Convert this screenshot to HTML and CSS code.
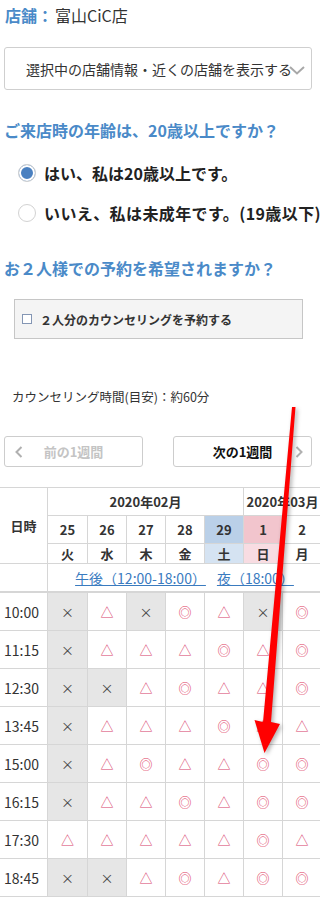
FILE: index.html
```html
<!DOCTYPE html>
<html lang="ja">
<head>
<meta charset="utf-8">
<title>予約</title>
<link rel="stylesheet" href="styles.css">
</head>
<body>
<div class="page">
  <div class="store"><span class="store-label">店舗：</span><span class="store-name">富山CiC店</span></div>
  <div class="select">選択中の店舗情報・近くの店舗を表示する<svg class="select-chev" width="16" height="9" viewBox="0 0 16 9"><polyline points="1,1 8,7.5 15,1" fill="none" stroke="#a8a8a8" stroke-width="2"/></svg></div>
  <h2 class="question q1">ご来店時の年齢は、20歳以上ですか？</h2>
  <div class="radios">
    <div class="radio"><span class="dot dot-on"></span>はい、私は20歳以上です。</div>
    <div class="radio"><span class="dot"></span><span class="wide">いいえ、私は未成年です。(19歳以下)</span></div>
  </div>
  <h2 class="question q2">お２人様での予約を希望されますか？</h2>
  <div class="pair"><span class="check"></span>２人分のカウンセリングを予約する</div>
  <p class="duration">カウンセリング時間(目安)：約60分</p>
  <div class="nav">
    <div class="btn btn-prev"><svg class="nav-chev nav-chev-l" width="8" height="12" viewBox="0 0 8 12"><polyline points="6.5,1 1.5,6 6.5,11" fill="none" stroke="#b0b0b0" stroke-width="2"/></svg>前の1週間</div>
    <div class="btn btn-next">次の1週間<svg class="nav-chev nav-chev-r" width="8" height="12" viewBox="0 0 8 12"><polyline points="1.5,1 6.5,6 1.5,11" fill="none" stroke="#b0b0b0" stroke-width="2"/></svg></div>
  </div>
</div>

<div class="cal">
  <div class="c h-date">日時</div>
  <div class="c h-month m1">2020年02月</div>
  <div class="c h-month m2">2020年03月</div>
  <div class="c h-day">25</div><div class="c h-day">26</div><div class="c h-day">27</div><div class="c h-day">28</div><div class="c h-day sat">29</div><div class="c h-day sun">1</div><div class="c h-day">2</div>
  <div class="c h-wd">火</div><div class="c h-wd">水</div><div class="c h-wd">木</div><div class="c h-wd">金</div><div class="c h-wd sat-l">土</div><div class="c h-wd sun-l">日</div><div class="c h-wd">月</div>
  <div class="c h-blank"></div>
  <div class="c h-links"><a class="lnk">午後（12:00-18:00）</a><a class="lnk">夜（18:00）</a></div>

  <div class="c t first">10:00</div><div class="c s x first">×</div><div class="c s tr first">△</div><div class="c s x first">×</div><div class="c s o first">◎</div><div class="c s tr first">△</div><div class="c s x first">×</div><div class="c s o first">◎</div>
  <div class="c t">11:15</div><div class="c s x">×</div><div class="c s tr">△</div><div class="c s tr">△</div><div class="c s tr">△</div><div class="c s o">◎</div><div class="c s tr">△</div><div class="c s o">◎</div>
  <div class="c t">12:30</div><div class="c s x">×</div><div class="c s x">×</div><div class="c s tr">△</div><div class="c s o">◎</div><div class="c s tr">△</div><div class="c s tr">△</div><div class="c s o">◎</div>
  <div class="c t">13:45</div><div class="c s x">×</div><div class="c s tr">△</div><div class="c s tr">△</div><div class="c s tr">△</div><div class="c s o">◎</div><div class="c s tr">△</div><div class="c s tr">△</div>
  <div class="c t">15:00</div><div class="c s x">×</div><div class="c s tr">△</div><div class="c s o">◎</div><div class="c s tr">△</div><div class="c s tr">△</div><div class="c s o">◎</div><div class="c s o">◎</div>
  <div class="c t">16:15</div><div class="c s x">×</div><div class="c s tr">△</div><div class="c s tr">△</div><div class="c s o">◎</div><div class="c s tr">△</div><div class="c s o">◎</div><div class="c s o">◎</div>
  <div class="c t">17:30</div><div class="c s tr">△</div><div class="c s tr">△</div><div class="c s tr">△</div><div class="c s tr">△</div><div class="c s tr">△</div><div class="c s o">◎</div><div class="c s tr">△</div>
  <div class="c t">18:45</div><div class="c s x">×</div><div class="c s x">×</div><div class="c s tr">△</div><div class="c s o">◎</div><div class="c s tr">△</div><div class="c s o">◎</div><div class="c s o">◎</div>
</div>

<svg class="arrow" width="320" height="901" viewBox="0 0 320 901">
  <polygon points="292,407 295.5,407 271,722 280,724 264.5,753 254.5,720 263,722" fill="#ff0000"/>
</svg>
</body>
</html>
```

FILE: styles.css
```css
html, body {
  margin: 0;
  padding: 0;
  overflow-x: hidden;
  background: #fff;
}
body {
  position: relative;
  font-family: "Noto Sans CJK JP", "Noto Sans", sans-serif;
  color: #333;
  width: 320px;
  min-height: 901px;
}
.page {
  padding: 0 8px 0 4px;
  width: 308px;
}
.store {
  padding-top: 4px;
  padding-left: 1px;
  font-size: 16px;
  line-height: 22px;
  white-space: nowrap;
}
.store-label {
  color: #4a8ac8;
  font-weight: bold;
}
.store-name {
  margin-left: 2px;
  color: #333;
}
.select {
  margin-top: 21px;
  height: 43px;
  box-sizing: border-box;
  border: 1px solid #cfcfcf;
  border-radius: 3px;
  display: flex;
  align-items: center;
  justify-content: center;
  font-size: 14px;
  color: #333;
  position: relative;
  white-space: nowrap;
  padding-left: 2px;
}
.select-chev {
  position: absolute;
  right: 6px;
  top: 18px;
}
.question {
  margin: 0;
  font-size: 16px;
  line-height: 24px;
  font-weight: bold;
  color: #4a8ac8;
  white-space: nowrap;
}
.q1 { margin-top: 28px; }
.q2 { margin-top: 31px; }
.radios {
  margin-top: 19px;
  display: flex;
  flex-direction: column;
  gap: 16px;
  padding-left: 14px;
}
.radio {
  display: flex;
  align-items: center;
  height: 24px;
  font-size: 16px;
  font-weight: bold;
  color: #222;
  white-space: nowrap;
}
.wide { letter-spacing: 0.4px; }
.dot {
  width: 18px;
  height: 18px;
  box-sizing: border-box;
  border: 1px solid #d2d2d2;
  border-radius: 50%;
  margin-right: 8px;
  flex: none;
  background: #fff;
}
.dot-on {
  background: #4a80c0;
  box-shadow: inset 0 0 0 2px #fff;
}
.pair {
  margin-top: 19px;
  margin-left: 10px;
  width: 289px;
  height: 40px;
  box-sizing: border-box;
  border: 1px solid #c6c6c6;
  background: #f4f4f4;
  display: flex;
  align-items: center;
  padding-left: 7px;
  font-size: 12px;
  font-weight: bold;
  color: #333;
  white-space: nowrap;
}
.check {
  width: 8px;
  height: 8px;
  border: 1px solid #8496b4;
  background: #fff;
  margin-right: 8px;
  flex: none;
}
.duration {
  margin: 48px 0 0 8px;
  font-size: 12.5px;
  line-height: 20px;
  color: #333;
  white-space: nowrap;
}
.nav {
  margin-top: 29px;
  display: flex;
  justify-content: space-between;
}
.btn {
  width: 139px;
  height: 31px;
  box-sizing: border-box;
  border: 1px solid #cdcdcd;
  border-radius: 3px;
  display: flex;
  align-items: center;
  justify-content: center;
  font-size: 13px;
  font-weight: bold;
  position: relative;
}
.btn-prev { color: #c4c4c4; }
.btn-next { color: #111; }
.nav-chev {
  position: absolute;
  top: 9px;
}
.nav-chev-l { left: 10px; }
.nav-chev-r { right: 8px; }

.cal {
  margin-top: 20px;
  display: grid;
  grid-template-columns: 48px 40px repeat(6, 39px);
  grid-template-rows: 28px 28px 20px 28px 39px repeat(7, 38px);
  width: 322px;
  border-top: 1px solid #d6d6d6;
}
.c {
  box-sizing: border-box;
  border-right: 1px solid #d6d6d6;
  border-bottom: 1px solid #d6d6d6;
  display: flex;
  align-items: center;
  justify-content: center;
  white-space: nowrap;
  overflow: visible;
}
.h-date {
  grid-row: 1 / 4;
  grid-column: 1;
  font-size: 13px;
  font-weight: bold;
  color: #333;
}
.h-month {
  font-size: 13px;
  font-weight: bold;
  color: #333;
}
.m1 { grid-column: 2 / 7; }
.m2 { grid-column: 7 / 9; }
.h-day {
  font-size: 13px;
  font-weight: bold;
  color: #333;
}
.h-wd {
  font-size: 13px;
  font-weight: bold;
  color: #333;
}
.sat { background: #bad0e8; }
.sun { background: #f2c5cd; }
.sat-l { background: #d5e3f2; }
.sun-l { background: #f8dce2; }
.h-links {
  grid-column: 2 / 9;
  gap: 11px;
  font-size: 14px;
}
.lnk {
  color: #3a7bbf;
  text-decoration: underline;
}
.t {
  justify-content: flex-start;
  padding-left: 4px;
  font-size: 14px;
  color: #333;
}
.first {
  border-top: 1px solid #d6d6d6;
}
.s {
  line-height: 1;
}
.x {
  background: #e6e6e6;
  color: #444;
  font-size: 13px;
}
.tr {
  color: #d8406a;
  font-size: 13px;
}
.o {
  color: #de3a5e;
  font-size: 13px;
}
.arrow {
  position: absolute;
  left: 0;
  top: 0;
  pointer-events: none;
  filter: drop-shadow(2px 2px 2px rgba(0, 0, 0, 0.3));
}
```
